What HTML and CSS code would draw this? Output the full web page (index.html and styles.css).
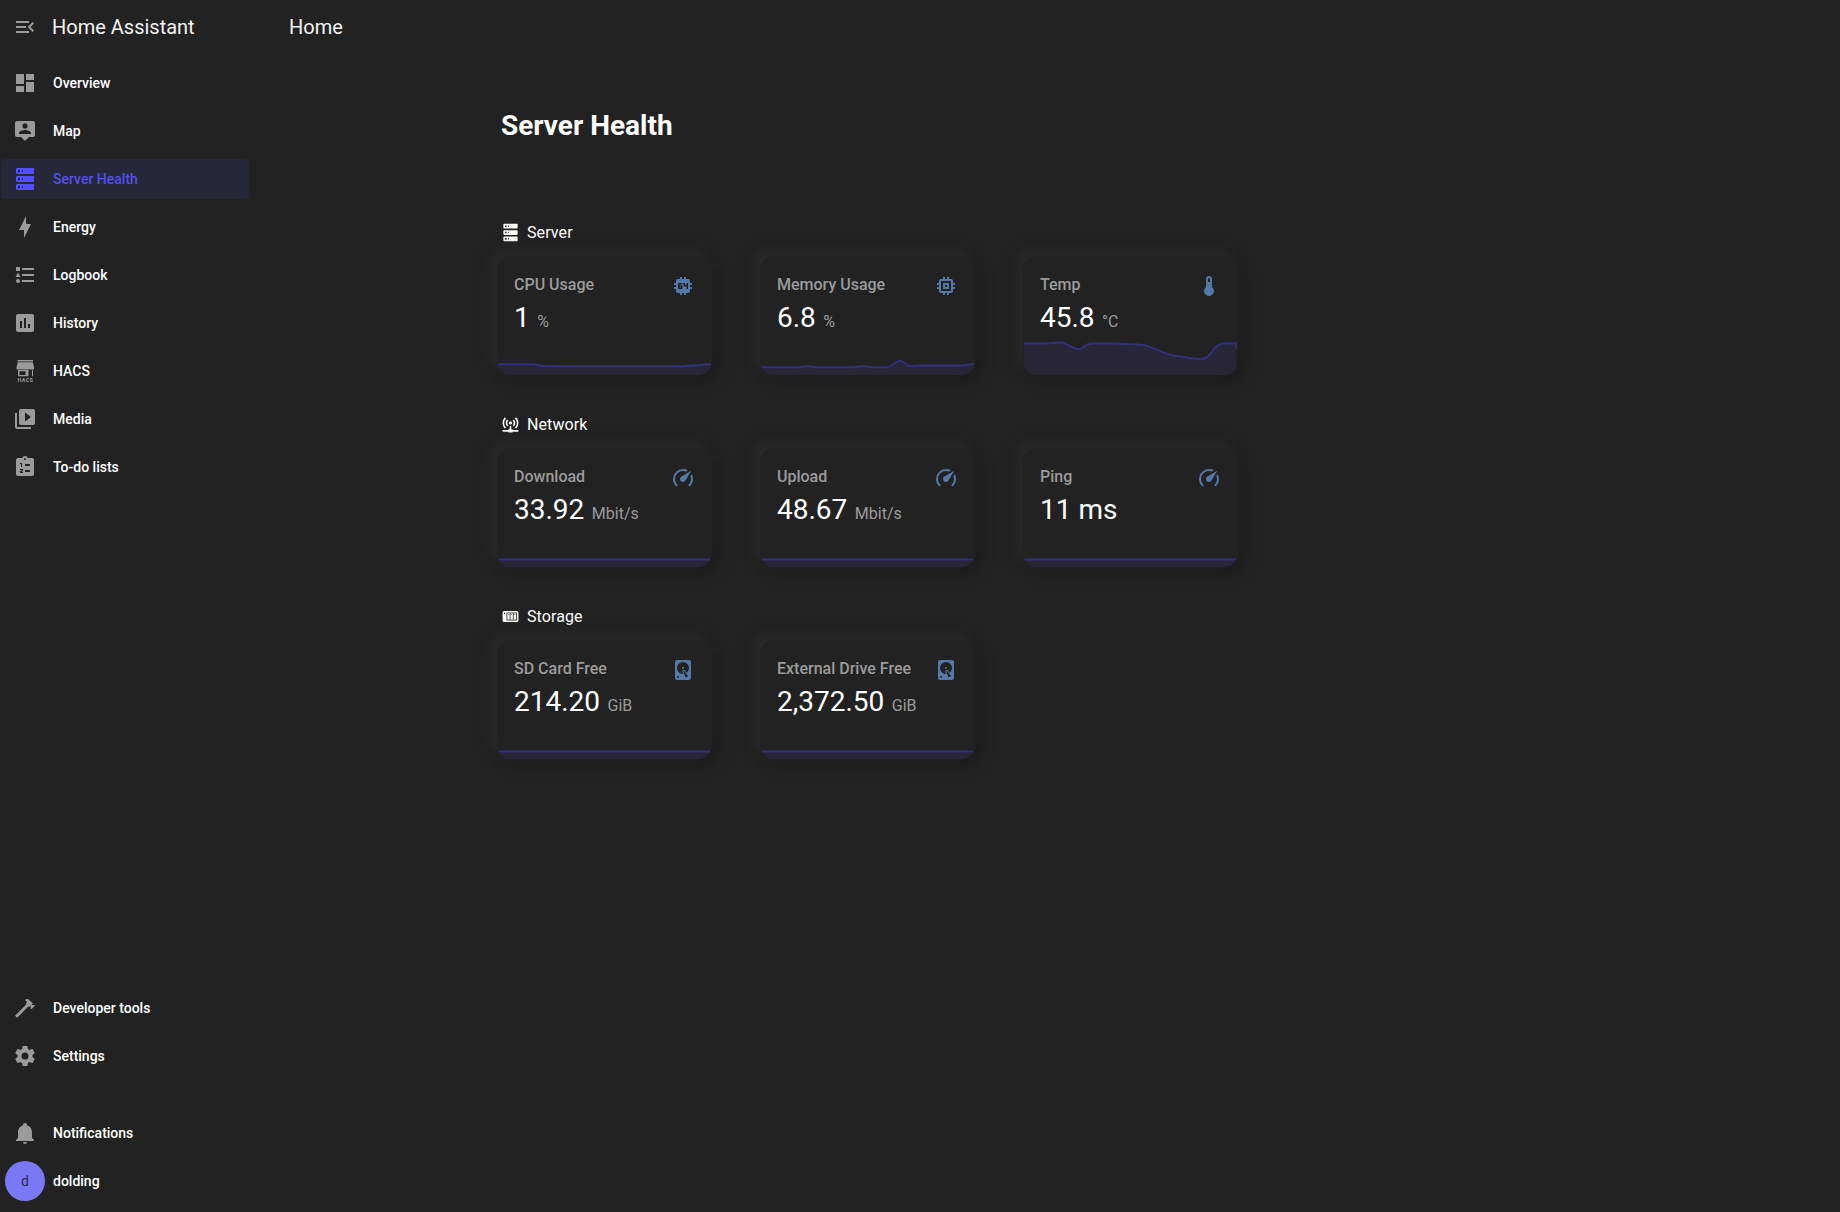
FILE: index.html
```html
<!DOCTYPE html>
<html lang="en">
<head>
<meta charset="utf-8">
<title>Home Assistant</title>
<link rel="stylesheet" href="styles.css">
</head>
<body>
<svg class="sprite" aria-hidden="true">
  <symbol id="server" viewBox="0 0 24 24"><path d="M4,1H20A1,1 0 0,1 21,2V6A1,1 0 0,1 20,7H4A1,1 0 0,1 3,6V2A1,1 0 0,1 4,1M4,9H20A1,1 0 0,1 21,10V14A1,1 0 0,1 20,15H4A1,1 0 0,1 3,14V10A1,1 0 0,1 4,9M4,17H20A1,1 0 0,1 21,18V22A1,1 0 0,1 20,23H4A1,1 0 0,1 3,22V18A1,1 0 0,1 4,17M9,5H10V3H9V5M9,13H10V11H9V13M9,21H10V19H9V21M5,3V5H7V3H5M5,11V13H7V11H5M5,19V21H7V19H5Z"/></symbol>
  <symbol id="gauge" viewBox="0 0 24 24"><path d="M12,16A3,3 0 0,1 9,13C9,11.88 9.61,10.9 10.5,10.39L20.21,4.77L14.68,14.35C14.18,15.33 13.17,16 12,16M12,3C13.81,3 15.5,3.5 16.97,4.32L14.87,5.53C14,5.19 13,5 12,5A8,8 0 0,0 4,13C4,15.21 4.89,17.21 6.34,18.65H6.35C6.74,19.04 6.74,19.67 6.35,20.06C5.96,20.45 5.32,20.45 4.93,20.07V20.07C3.12,18.26 2,15.76 2,13A10,10 0 0,1 12,3M22,13C22,15.76 20.88,18.26 19.07,20.07V20.07C18.68,20.45 18.05,20.45 17.66,20.06C17.27,19.67 17.27,19.04 17.66,18.65V18.65C19.11,17.2 20,15.21 20,13C20,12 19.81,11 19.46,10.1L20.67,8C21.5,9.5 22,11.18 22,13Z"/></symbol>
  <symbol id="disk" viewBox="0 0 24 24"><path d="M6,2H18A2,2 0 0,1 20,4V20A2,2 0 0,1 18,22H6A2,2 0 0,1 4,20V4A2,2 0 0,1 6,2M12,4A6,6 0 0,0 6,10C6,13.31 8.69,16 12.1,16L11.22,13.77C10.95,13.29 11.11,12.68 11.59,12.4L12.45,11.9C12.93,11.63 13.54,11.79 13.82,12.27L15.74,14.69C17.12,13.59 18,11.9 18,10A6,6 0 0,0 12,4M12,9A1,1 0 0,1 13,10A1,1 0 0,1 12,11A1,1 0 0,1 11,10A1,1 0 0,1 12,9M7,18A1,1 0 0,0 6,19A1,1 0 0,0 7,20A1,1 0 0,0 8,19A1,1 0 0,0 7,18M12.09,13.27L14.58,19.58L17.17,18.08L12.95,12.77L12.09,13.27Z"/></symbol>
</svg>
<div class="app">
  <aside class="sidebar">
    <header class="brand">
      <svg class="icon" viewBox="0 0 24 24"><path d="M21,15.61L19.59,17L14.58,12L19.59,7L21,8.39L17.44,12L21,15.61M3,6H16V8H3V6M3,13V11H13V13H3M3,18V16H16V18H3Z"/></svg>
      <span class="bar-title">Home Assistant</span>
    </header>
    <nav class="menu">
      <a class="item"><svg class="icon" viewBox="0 0 24 24"><path d="M13,3V9H21V3M13,21H21V11H13M3,21H11V15H3M3,13H11V3H3V13Z"/></svg><span>Overview</span></a>
      <a class="item"><svg class="icon" viewBox="0 0 24 24"><path d="M20,2H4A2,2 0 0,0 2,4V16A2,2 0 0,0 4,18H8L12,22L16,18H20A2,2 0 0,0 22,16V4A2,2 0 0,0 20,2M12,4.3C13.5,4.3 14.7,5.5 14.7,7C14.7,8.5 13.5,9.7 12,9.7C10.5,9.7 9.3,8.5 9.3,7C9.3,5.5 10.5,4.3 12,4.3M18,15H6V14.1C6,12.1 10,11 12,11C14,11 18,12.1 18,14.1V15Z"/></svg><span>Map</span></a>
      <a class="item active"><svg class="icon"><use href="#server"/></svg><span>Server Health</span></a>
      <a class="item"><svg class="icon" viewBox="0 0 24 24"><path d="M11 15H6L13 1V9H18L11 23V15Z"/></svg><span>Energy</span></a>
      <a class="item"><svg class="icon" viewBox="0 0 24 24"><path d="M5,9.5L7.5,14H2.5L5,9.5M3,4H7V8H3V4M5,20A2,2 0 0,0 7,18A2,2 0 0,0 5,16A2,2 0 0,0 3,18A2,2 0 0,0 5,20M9,5V7H21V5H9M9,19H21V17H9V19M9,13H21V11H9V13Z"/></svg><span>Logbook</span></a>
      <a class="item"><svg class="icon" viewBox="0 0 24 24"><path d="M9 17H7V10H9V17M13 17H11V7H13V17M17 17H15V13H17V17M19 3H5C3.89 3 3 3.89 3 5V19C3 20.1 3.89 21 5 21H19C20.1 21 21 20.1 21 19V5C21 3.89 20.1 3 19 3Z"/></svg><span>History</span></a>
      <a class="item"><svg class="icon" viewBox="0 0 24 24"><path d="M4.5,1H20V2.4H4.5ZM4.7,3.2H19.8L21,8V10.4H3.5V8ZM5,11H6.5V16H12.5V12.2H6.5V11H15.5V17.3H5ZM19,11H20V17.3H19Z"/><text class="hacs" x="12.2" y="23.2" text-anchor="middle" textLength="15.5">HACS</text></svg><span>HACS</span></a>
      <a class="item"><svg class="icon" viewBox="0 0 24 24"><path d="M4,6H2V20A2,2 0 0,0 4,22H18V20H4V6M20,2H8A2,2 0 0,0 6,4V16A2,2 0 0,0 8,18H20A2,2 0 0,0 22,16V4A2,2 0 0,0 20,2M12,14.5V5.5L18,10L12,14.5Z"/></svg><span>Media</span></a>
      <a class="item"><svg class="icon" viewBox="0 0 24 24"><path fill-rule="evenodd" d="M19,3H14.82C14.4,1.84 13.3,1 12,1C10.7,1 9.6,1.84 9.18,3H5A2,2 0 0,0 3,5V19A2,2 0 0,0 5,21H19A2,2 0 0,0 21,19V5A2,2 0 0,0 19,3M12,3A1,1 0 0,1 13,4A1,1 0 0,1 12,5A1,1 0 0,1 11,4A1,1 0 0,1 12,3M7,8H9V12H8V9H7ZM7,14H10V16L8.2,17H10V18H7V16.3L9,15.2V15H7ZM12,9H17V11H12ZM12,15H17V17H12Z"/></svg><span>To-do lists</span></a>
    </nav>
    <nav class="menu tools">
      <a class="item"><svg class="icon" viewBox="0 0 24 24"><path d="M2 19.63L13.43 8.2L12.72 7.5L14.14 6.07L12 3.89C13.2 2.7 15.09 2.7 16.27 3.89L19.87 7.5L18.45 8.91H21.29L22 9.62L18.45 13.21L17.74 12.5V9.62L16.27 11.04L15.56 10.33L4.13 21.76L2 19.63Z"/></svg><span>Developer tools</span></a>
      <a class="item"><svg class="icon" viewBox="0 0 24 24"><path d="M12,15.5A3.5,3.5 0 0,1 8.5,12A3.5,3.5 0 0,1 12,8.5A3.5,3.5 0 0,1 15.5,12A3.5,3.5 0 0,1 12,15.5M19.43,12.97C19.47,12.65 19.5,12.33 19.5,12C19.5,11.67 19.47,11.34 19.43,11L21.54,9.37C21.73,9.22 21.78,8.95 21.66,8.73L19.66,5.27C19.54,5.05 19.27,4.96 19.05,5.05L16.56,6.05C16.04,5.66 15.5,5.32 14.87,5.07L14.5,2.42C14.46,2.18 14.25,2 14,2H10C9.75,2 9.54,2.18 9.5,2.42L9.13,5.07C8.5,5.32 7.96,5.66 7.44,6.05L4.95,5.05C4.73,4.96 4.46,5.05 4.34,5.27L2.34,8.73C2.21,8.95 2.27,9.22 2.46,9.37L4.57,11C4.53,11.34 4.5,11.67 4.5,12C4.5,12.33 4.53,12.65 4.57,12.97L2.46,14.63C2.27,14.78 2.21,15.05 2.34,15.27L4.34,18.73C4.46,18.95 4.73,19.03 4.95,18.95L7.44,17.94C7.96,18.34 8.5,18.68 9.13,18.93L9.5,21.58C9.54,21.82 9.75,22 10,22H14C14.25,22 14.46,21.82 14.5,21.58L14.87,18.93C15.5,18.67 16.04,18.34 16.56,17.94L19.05,18.95C19.27,19.03 19.54,18.95 19.66,18.73L21.66,15.27C21.78,15.05 21.73,14.78 21.54,14.63L19.43,12.97Z"/></svg><span>Settings</span></a>
    </nav>
    <nav class="menu account">
      <a class="item"><svg class="icon" viewBox="0 0 24 24"><path d="M21,19V20H3V19L5,17V11C5,7.9 7.03,5.17 10,4.29C10,4.19 10,4.1 10,4A2,2 0 0,1 12,2A2,2 0 0,1 14,4C14,4.1 14,4.19 14,4.29C16.97,5.17 19,7.9 19,11V17L21,19M14,21A2,2 0 0,1 12,23A2,2 0 0,1 10,21"/></svg><span>Notifications</span></a>
      <a class="item user"><span class="avatar">d</span><span>dolding</span></a>
    </nav>
  </aside>
  <main class="main">
    <header class="toolbar"><span class="bar-title">Home</span></header>
    <div class="view">
      <h1 class="title">Server Health</h1>
      <section class="group">
        <h2 class="heading"><svg class="heading-icon"><use href="#server"/></svg>Server</h2>
        <div class="cards">
          <article class="card">
            <div class="top"><span class="name">CPU Usage</span><svg class="icon" viewBox="0 0 24 24"><path d="M9,3V5H7A2,2 0 0,0 5,7V9H3V11H5V13H3V15H5V17A2,2 0 0,0 7,19H9V21H11V19H13V21H15V19H17A2,2 0 0,0 19,17V15H21V13H19V11H21V9H19V7A2,2 0 0,0 17,5H15V3H13V5H11V3M8,9H11.5V10.5H8.5V11.25H10.5A1,1 0 0,1 11.5,12.25V14A1,1 0 0,1 10.5,15H8A1,1 0 0,1 7,14V10A1,1 0 0,1 8,9M12.5,9H14V11H15.5V9H17V15H15.5V12.5H13.5A1,1 0 0,1 12.5,11.5M8.5,12.75V13.5H10V12.75Z"/></svg></div>
            <div class="reading"><span class="value">1</span><span class="unit">%</span></div>
            <svg class="graph" viewBox="0 0 213 38"><path class="area" d="M0,27.3H33C39,27.3 43,29 49,29L70,29.4H180C194,29.4 200,27.6 213,27.3V38H0Z"/><path class="line" d="M0,27.3H33C39,27.3 43,29 49,29L70,29.4H180C194,29.4 200,27.6 213,27.3"/></svg>
          </article>
          <article class="card">
            <div class="top"><span class="name">Memory Usage</span><svg class="icon" viewBox="0 0 24 24"><path d="M17,17H7V7H17M21,11V9H19V7C19,5.89 18.1,5 17,5H15V3H13V5H11V3H9V5H7C5.89,5 5,5.89 5,7V9H3V11H5V13H3V15H5V17A2,2 0 0,0 7,19H9V21H11V19H13V21H15V19H17A2,2 0 0,0 19,17V15H21V13H19V11M13,13H11V11H13M15,9H9V15H15V9Z"/></svg></div>
            <div class="reading"><span class="value">6.8</span><span class="unit">%</span></div>
            <svg class="graph" viewBox="0 0 213 38"><path class="area" d="M0,30.3H34C39,30.3 42,29.2 46,29.2S54,30.3 59,30.3H89C94,30.3 98,29.2 102,29.2S110,30.3 114,30.3C119,30.3 124,30.6 127.5,30C132,29 135,23.7 139,23.7S145,29.4 150,29.4L156,28.4H200C206,28.4 208,27 213,27V38H0Z"/><path class="line" d="M0,30.3H34C39,30.3 42,29.2 46,29.2S54,30.3 59,30.3H89C94,30.3 98,29.2 102,29.2S110,30.3 114,30.3C119,30.3 124,30.6 127.5,30C132,29 135,23.7 139,23.7S145,29.4 150,29.4L156,28.4H200C206,28.4 208,27 213,27"/></svg>
          </article>
          <article class="card">
            <div class="top"><span class="name">Temp</span><svg class="icon" viewBox="0 0 24 24"><path d="M15 13V5A3 3 0 0 0 9 5V13A5 5 0 1 0 15 13M12 4A1 1 0 0 1 13 5V8H11V5A1 1 0 0 1 12 4Z"/></svg></div>
            <div class="reading"><span class="value">45.8</span><span class="unit">°C</span></div>
            <svg class="graph" viewBox="0 0 213 38"><path class="area" d="M0,6.6H24C29,6.3 32,5.4 37,5.5C43,6 49,12.3 54.5,12.3S60,6.6 68,6.6H92C105,6.9 112,7 119,8C128,9.6 138,16 149,18.5L163,20.6C168,21.4 171,22.1 176,22.1C188,22.5 189,6.7 199,6.5L212,6.2V12.6L213,38H0Z"/><path class="line" d="M0,6.6H24C29,6.3 32,5.4 37,5.5C43,6 49,12.3 54.5,12.3S60,6.6 68,6.6H92C105,6.9 112,7 119,8C128,9.6 138,16 149,18.5L163,20.6C168,21.4 171,22.1 176,22.1C188,22.5 189,6.7 199,6.5L212,6.2L213,12.6"/></svg>
          </article>
        </div>
      </section>
      <section class="group">
        <h2 class="heading"><svg class="heading-icon" viewBox="0 0 24 24"><path d="M4.93,2.93C3.12,4.74 2,7.24 2,10C2,12.76 3.12,15.26 4.93,17.07L6.34,15.66C4.89,14.22 4,12.22 4,10C4,7.79 4.89,5.78 6.34,4.34L4.93,2.93M19.07,2.93L17.66,4.34C19.11,5.78 20,7.79 20,10C20,12.22 19.11,14.22 17.66,15.66L19.07,17.07C20.88,15.26 22,12.76 22,10C22,7.24 20.88,4.74 19.07,2.93M7.76,5.76C6.67,6.85 6,8.35 6,10C6,11.65 6.67,13.15 7.76,14.24L9.17,12.83C8.45,12.11 8,11.11 8,10C8,8.89 8.45,7.89 9.17,7.17L7.76,5.76M16.24,5.76L14.83,7.17C15.55,7.89 16,8.89 16,10C16,11.11 15.55,12.11 14.83,12.83L16.24,14.24C17.33,13.15 18,11.65 18,10C18,8.35 17.33,6.85 16.24,5.76M12,8A2,2 0 0,0 10,10A2,2 0 0,0 12,12A2,2 0 0,0 14,10A2,2 0 0,0 12,8M11,14V18H10A1,1 0 0,0 9,19H2V21H9A1,1 0 0,0 10,22H14A1,1 0 0,0 15,21H22V19H15A1,1 0 0,0 14,18H13V14H11Z"/></svg>Network</h2>
        <div class="cards">
          <article class="card">
            <div class="top"><span class="name">Download</span><svg class="icon"><use href="#gauge"/></svg></div>
            <div class="reading"><span class="value">33.92</span><span class="unit">Mbit/s</span></div>
            <svg class="graph" viewBox="0 0 213 38"><path class="area" d="M0,30.4H213V38H0Z"/><path class="line" d="M0,30.4H213"/></svg>
          </article>
          <article class="card">
            <div class="top"><span class="name">Upload</span><svg class="icon"><use href="#gauge"/></svg></div>
            <div class="reading"><span class="value">48.67</span><span class="unit">Mbit/s</span></div>
            <svg class="graph" viewBox="0 0 213 38"><path class="area" d="M0,30.4H213V38H0Z"/><path class="line" d="M0,30.4H213"/></svg>
          </article>
          <article class="card">
            <div class="top"><span class="name">Ping</span><svg class="icon"><use href="#gauge"/></svg></div>
            <div class="reading"><span class="value">11 ms</span></div>
            <svg class="graph" viewBox="0 0 213 38"><path class="area" d="M0,30.4H213V38H0Z"/><path class="line" d="M0,30.4H213"/></svg>
          </article>
        </div>
      </section>
      <section class="group">
        <h2 class="heading"><svg class="heading-icon" viewBox="0 0 24 24"><path fill-rule="evenodd" d="M4,5A2,2 0 0,0 2,7V17A2,2 0 0,0 4,19H20A2,2 0 0,0 22,17V7A2,2 0 0,0 20,5ZM4.5,7A1,1 0 0,1 5.5,8A1,1 0 0,1 4.5,9A1,1 0 0,1 3.5,8A1,1 0 0,1 4.5,7ZM7,7H20V17H7ZM8,8V16H11V8ZM12,8V16H15V8ZM16,8V16H19V8ZM9,9H10V10H9ZM13,9H14V10H13ZM17,9H18V10H17Z"/></svg>Storage</h2>
        <div class="cards">
          <article class="card">
            <div class="top"><span class="name">SD Card Free</span><svg class="icon"><use href="#disk"/></svg></div>
            <div class="reading"><span class="value">214.20</span><span class="unit">GiB</span></div>
            <svg class="graph" viewBox="0 0 213 38"><path class="area" d="M0,30.4H213V38H0Z"/><path class="line" d="M0,30.4H213"/></svg>
          </article>
          <article class="card">
            <div class="top"><span class="name">External Drive Free</span><svg class="icon"><use href="#disk"/></svg></div>
            <div class="reading"><span class="value">2,372.50</span><span class="unit">GiB</span></div>
            <svg class="graph" viewBox="0 0 213 38"><path class="area" d="M0,30.4H213V38H0Z"/><path class="line" d="M0,30.4H213"/></svg>
          </article>
        </div>
      </section>
    </div>
  </main>
</div>
</body>
</html>
```
FILE: styles.css
```css
* { box-sizing: border-box; }
body {
  margin: 0;
  background: #222222;
  color: #ffffff;
  font-family: Roboto, "Noto Sans", sans-serif;
}
.sprite { display: none; }
.app { display: flex; height: 1212px; overflow: hidden; }
.icon { width: 24px; height: 24px; flex: none; fill: #9b9b9b; }

.sidebar {
  display: flex;
  flex-direction: column;
  width: 256px;
  padding-bottom: 11px;
}
.brand { display: flex; align-items: center; gap: 15px; height: 54px; padding-left: 13px; }
.bar-title { font-size: 20px; line-height: 24px; color: #f2f2f2; }
.menu { display: flex; flex-direction: column; gap: 8px; padding: 9px 7px 0 1px; }
.tools { margin-top: auto; }
.account { padding-top: 37px; }
.item {
  display: flex;
  align-items: center;
  gap: 16px;
  height: 40px;
  padding-left: 12px;
  border-radius: 4px;
  font-size: 14px;
  font-weight: 500;
}
.active { background: #27273a; color: #5250ee; }
.active .icon { fill: #524ff5; }
.hacs { font-size: 5.5px; font-weight: 700; }
.user { padding-left: 4px; gap: 8px; }
.avatar {
  display: grid;
  place-items: center;
  width: 40px;
  height: 40px;
  border-radius: 50%;
  background: #7b78f5;
  color: #2b2a4a;
  font-weight: 400;
}

.main { flex: 1; }
.toolbar { display: flex; align-items: center; height: 54px; padding-left: 33px; }
.view { padding: 52px 0 0 241px; }
.title { margin: 0 0 66px 4px; font-size: 28px; line-height: 39px; font-weight: 700; }
.group { height: 192px; }
.heading {
  display: flex;
  align-items: center;
  gap: 7.5px;
  height: 42px;
  margin: 0 0 3px;
  padding-left: 3.5px;
  font-size: 16px;
  font-weight: 400;
  letter-spacing: 0.1px;
}
.heading-icon { width: 19px; height: 19px; fill: #ffffff; }
.cards { display: grid; grid-template-columns: repeat(3, 215px); gap: 48px; }
.card {
  display: flex;
  flex-direction: column;
  height: 119px;
  padding: 0 1px;
  border-radius: 14px;
  background: #222222;
  box-shadow: -6px -6px 14px #2a2a2a, 7px 7px 12px #1d1d1d;
  overflow: hidden;
}
.top { display: flex; flex: none; justify-content: space-between; padding: 18px 16px 0; height: 42px; }
.name { font-size: 16px; line-height: 22px; font-weight: 500; color: #9b9b9b; }
.card .icon { fill: #5478a8; }
.reading { display: flex; flex: none; align-items: baseline; gap: 7.5px; height: 39px; padding-left: 16px; line-height: 39px; }
.value { font-size: 28px; }
.unit { font-size: 16px; color: #9b9b9b; }
.graph { display: block; flex: none; width: 213px; height: 38px; margin-top: auto; }
.area { fill: #282636; }
.line { fill: none; stroke: #31307a; stroke-width: 2; }
```
